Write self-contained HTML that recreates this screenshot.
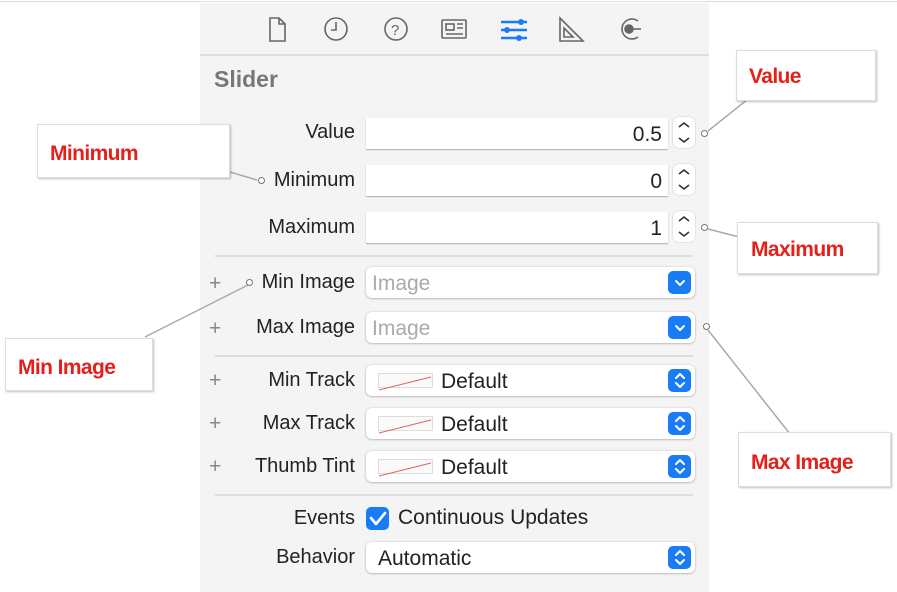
<!DOCTYPE html>
<html><head><style>
*{margin:0;padding:0;box-sizing:border-box}
body{width:897px;height:592px;background:#fff;position:relative;overflow:hidden;font-family:"Liberation Sans",sans-serif}
.a{position:absolute}
#panel{left:200px;top:3px;width:509px;height:589px;background:#f4f4f4}
.lbl{position:absolute;right:542px;font-size:20px;color:#222;text-align:right;white-space:nowrap}
.tf{position:absolute;left:366px;width:302px;height:31px;background:#fff;box-shadow:0 1px 1px rgba(0,0,0,.3);font-size:21px;text-align:right;padding-right:6px;line-height:33px;color:#222}
.st{position:absolute;left:673px;width:22px;height:31px;border-radius:6px;background:#fff;box-shadow:0 0 1px rgba(0,0,0,.4)}
.pu{position:absolute;left:366px;width:329px;height:31px;background:#fff;border-radius:6px;box-shadow:0 0.5px 2px rgba(0,0,0,.35);font-size:21px;line-height:33px;color:#222}
.btn{position:absolute;right:4px;top:4px;width:23px;height:23px;border-radius:5px;background:#1a7cf5}
.sep{position:absolute;left:215px;width:478px;height:2px;background:#ddd}
.plus{position:absolute;left:209px;font-size:21px;color:#888}
.sw{position:absolute;left:12px;top:8px;width:55px;height:15px;border:1px solid #ddd;background:#fafafa}
.box{position:absolute;background:#fff;border:1px solid #ddd;box-shadow:1px 1px 2px rgba(0,0,0,.25);color:#e3201b;font-size:21px;font-weight:bold;letter-spacing:-0.6px}
.dot{position:absolute;width:7px;height:7px;border:1px solid #777;border-radius:50%;background:#fff}
</style></head><body>
<div class="a" style="left:0;top:1px;width:897px;height:1px;background:#ddd"></div>
<div class="a" id="panel"></div>
<div class="a" style="left:200px;top:54px;width:509px;height:2px;background:#ddd"></div>
<svg class="a" style="left:260px;top:14px" width="400" height="30" fill="none" stroke="#666" stroke-width="1.6">
<path d="M10 4h9l6 6v17H10z M19 4v6h6"/>
<circle cx="76" cy="15" r="11"/><path d="M76 8v8h-5"/>
<circle cx="136" cy="15" r="11"/><text x="131" y="21" font-size="15" fill="#666" stroke="none" font-family="Liberation Sans">?</text>
<rect x="182" y="6" width="24" height="18" rx="1"/><rect x="186" y="10" width="8" height="6"/><path d="M197 10h6M197 14h6M186 20h17"/>
<g stroke="#1a7cf5" stroke-width="2.4"><path d="M241 8h26M241 16h26M241 24h26"/></g>
<g fill="#1a7cf5" stroke="none"><circle cx="261" cy="8" r="3"/><circle cx="247" cy="16" r="3"/><circle cx="259" cy="24" r="3"/></g>
<path d="M300 4v23h23z M304 14v9h9z"/>
<path d="M378 7a10 10 0 1 0 0 16"/><circle cx="369" cy="15" r="4" fill="#666"/><path d="M369 15h12"/>
</svg>
<div class="a" style="left:214px;top:66px;font-size:23px;font-weight:bold;color:#777">Slider</div>

<div class="lbl" style="top:121px">Value</div>
<div class="tf" style="top:118px">0.5</div><div class="st" style="top:117px"></div>
<div class="lbl" style="top:169px">Minimum</div>
<div class="tf" style="top:165px">0</div><div class="st" style="top:164px"></div>
<div class="lbl" style="top:216px">Maximum</div>
<div class="tf" style="top:212px">1</div><div class="st" style="top:211px"></div>
<svg class="a" style="left:673px;top:117px" width="22" height="130" fill="none" stroke="#333" stroke-width="1.6">
<path d="M6 10l5-4 5 4M6 21l5 4 5-4"/><path d="M6 57l5-4 5 4M6 68l5 4 5-4"/><path d="M6 104l5-4 5 4M6 115l5 4 5-4"/></svg>

<div class="sep" style="top:255px"></div>
<div class="plus" style="top:272px">+</div>
<div class="lbl" style="top:271px">Min Image</div>
<div class="pu" style="top:267px"><span style="color:#aaa;padding-left:6px">Image</span><div class="btn"></div></div>
<div class="plus" style="top:317px">+</div>
<div class="lbl" style="top:316px">Max Image</div>
<div class="pu" style="top:312px"><span style="color:#aaa;padding-left:6px">Image</span><div class="btn"></div></div>
<div class="sep" style="top:355px"></div>

<div class="plus" style="top:369px">+</div><div class="lbl" style="top:369px">Min Track</div>
<div class="pu" style="top:365px"><div class="sw"></div><span style="position:absolute;left:75px">Default</span><div class="btn"></div></div>
<div class="plus" style="top:412px">+</div><div class="lbl" style="top:412px">Max Track</div>
<div class="pu" style="top:408px"><div class="sw"></div><span style="position:absolute;left:75px">Default</span><div class="btn"></div></div>
<div class="plus" style="top:455px">+</div><div class="lbl" style="top:455px">Thumb Tint</div>
<div class="pu" style="top:451px"><div class="sw"></div><span style="position:absolute;left:75px">Default</span><div class="btn"></div></div>
<div class="sep" style="top:494px"></div>

<div class="lbl" style="top:507px">Events</div>
<div class="a" style="left:366px;top:507px;width:23px;height:23px;border-radius:5px;background:#1a7cf5"></div>
<div class="a" style="left:398px;top:506px;font-size:21px;color:#222">Continuous Updates</div>
<div class="lbl" style="top:546px">Behavior</div>
<div class="pu" style="top:542px"><span style="padding-left:12px">Automatic</span><div class="btn"></div></div>

<svg class="a" style="left:0;top:0" width="897" height="592" fill="none">
<g stroke="#fff" stroke-width="2" stroke-linecap="round" stroke-linejoin="round">
<path d="M676 281l4 4 4-4M676 326l4 4 4-4"/>
<path d="M676 378l4-4 4 4M676 383l4 4 4-4M676 421l4-4 4 4M676 426l4 4 4-4M676 464l4-4 4 4M676 469l4 4 4-4M676 555l4-4 4 4M676 560l4 4 4-4"/>
<path d="M371 518l5 6 9-11" stroke-width="2.6"/></g>
<g stroke="#e06060" stroke-width="1"><path d="M379 390l52-13M379 433l52-13M379 476l52-13"/></g>
<g stroke="#aaa" stroke-width="1.5"><path d="M708 131l55-44M230 172l27 8M708 229l35 9M248 285l-103 52M708 330l82 104"/></g>
</svg>
<div class="dot" style="left:701px;top:130px"></div>
<div class="dot" style="left:258px;top:177px"></div>
<div class="dot" style="left:701px;top:224px"></div>
<div class="dot" style="left:246px;top:279px"></div>
<div class="dot" style="left:703px;top:323px"></div>

<div class="box" style="left:736px;top:50px;width:140px;height:51px;padding:14px 0 0 12px">Value</div>
<div class="box" style="left:37px;top:124px;width:193px;height:54px;padding:17px 0 0 12px">Minimum</div>
<div class="box" style="left:737px;top:222px;width:141px;height:52px;padding:15px 0 0 13px">Maximum</div>
<div class="box" style="left:5px;top:338px;width:148px;height:53px;padding:17px 0 0 12px">Min Image</div>
<div class="box" style="left:738px;top:432px;width:153px;height:55px;padding:18px 0 0 12px">Max Image</div>
</body></html>
